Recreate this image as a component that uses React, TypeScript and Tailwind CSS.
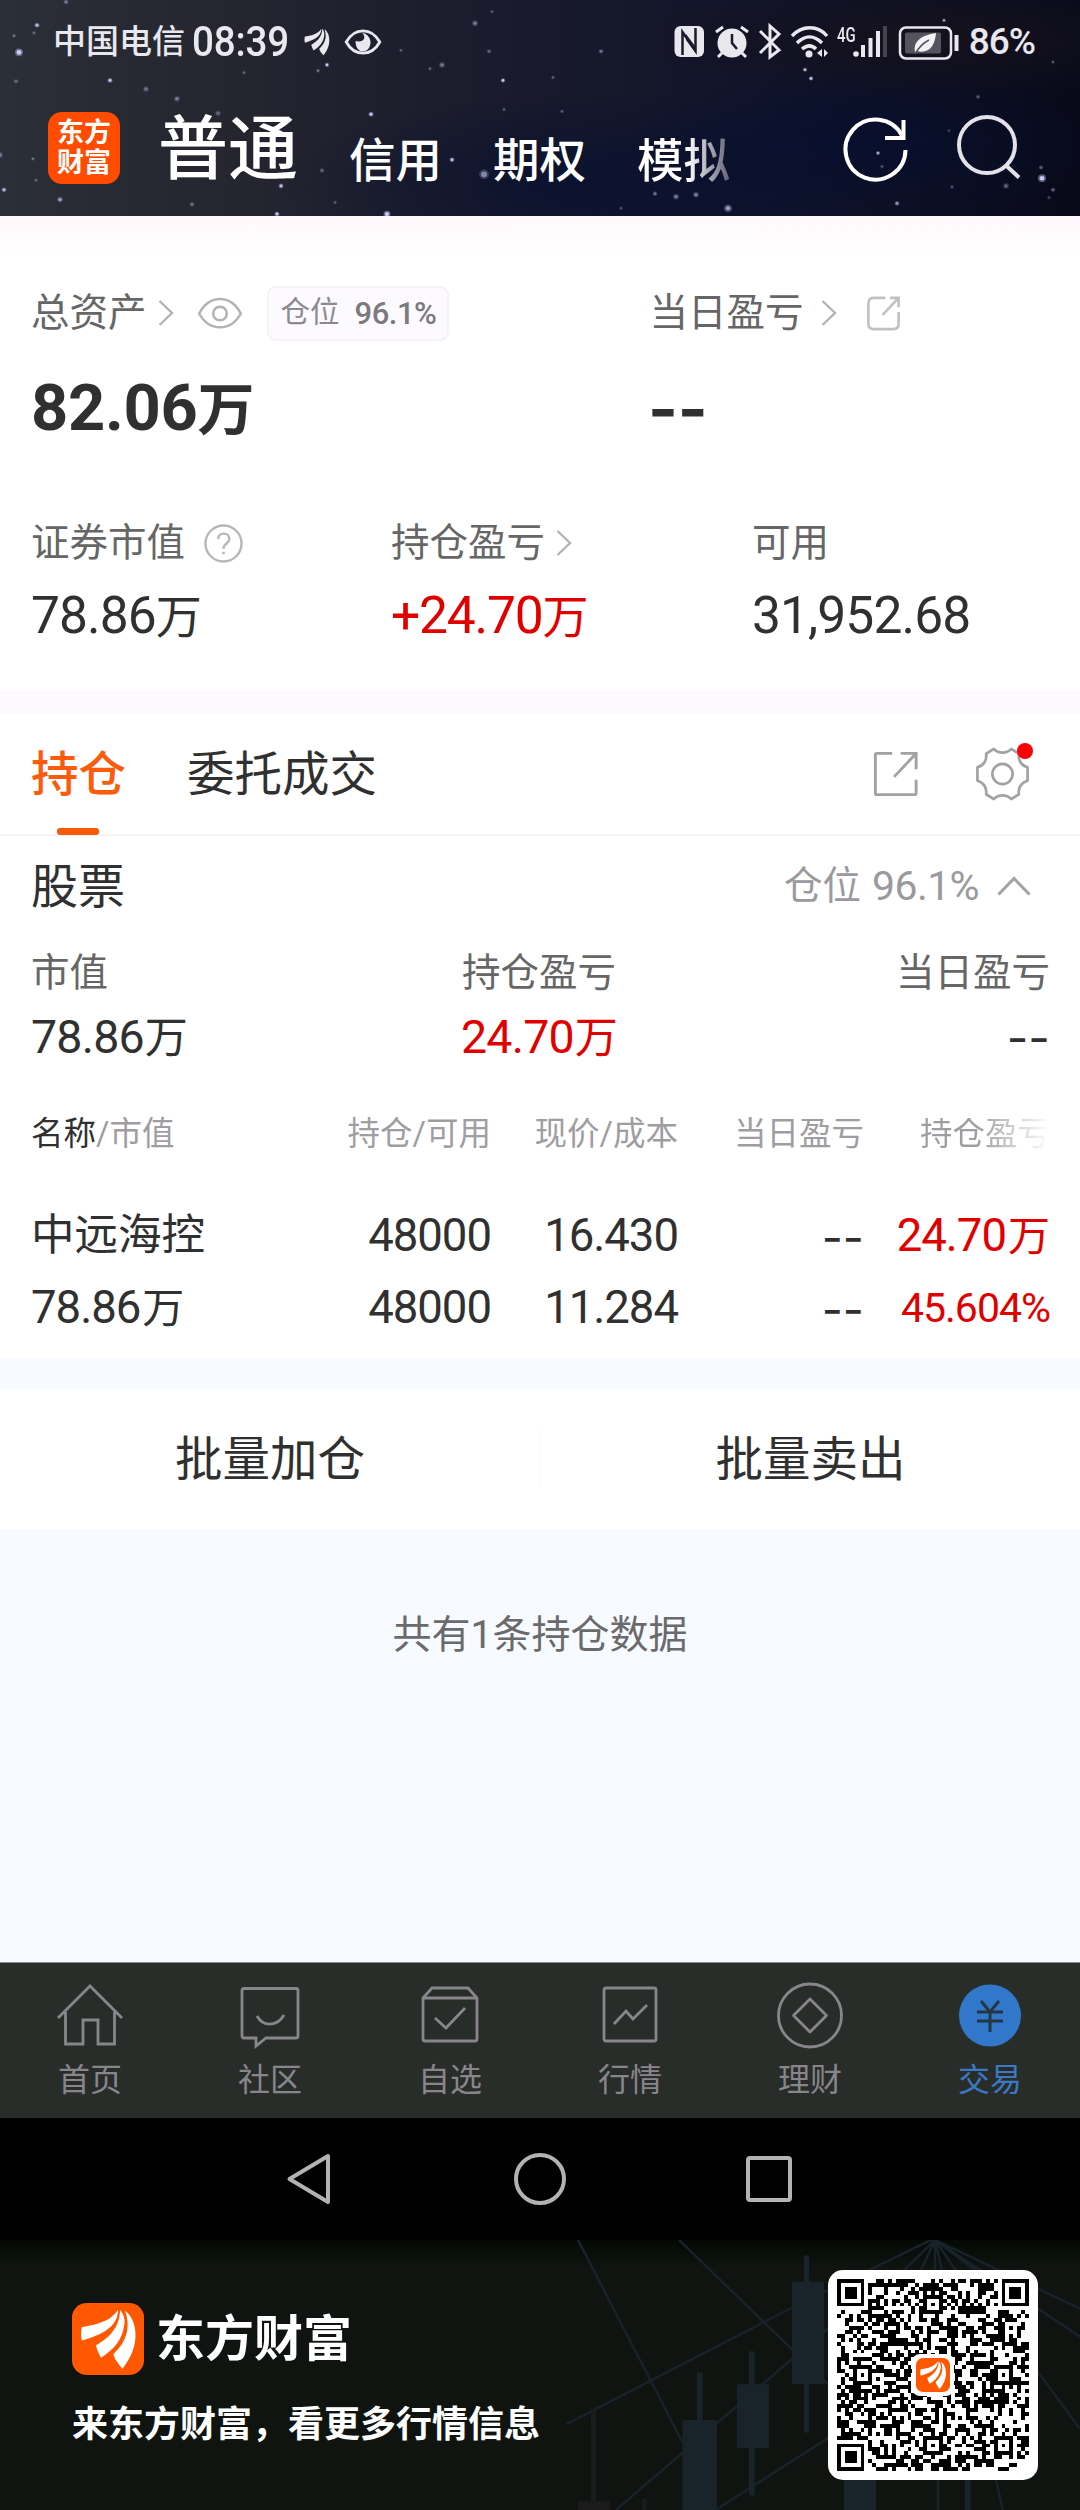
import React from 'react';

interface IconProps {
  className?: string;
}

interface Holding {
  name: string;
  value: string;
  amount: string;
  available: string;
  price: string;
  cost: string;
  profit: string;
  profitRate: string;
}

const holdings: Holding[] = [
  {
    name: '中远海控',
    value: '78.86',
    amount: '48000',
    available: '48000',
    price: '16.430',
    cost: '11.284',
    profit: '24.70',
    profitRate: '45.604%',
  },
];

// x, y, radius, opacity
const stars = [
  [19, 54, 4, 0.95], [37, 26, 2.5, 0.8], [14, 37, 2, 0.4], [34, 34, 2, 0.3], [16, 84, 2.5, 0.3],
  [110, 83, 2.5, 0.9], [146, 92, 3, 0.35], [177, 102, 3, 0.4], [218, 117, 3, 0.3], [327, 67, 2.2, 0.9],
  [318, 73, 2, 0.4], [244, 75, 2, 0.3], [371, 118, 2.5, 0.9], [452, 165, 2.5, 0.85], [484, 180, 5, 0.5],
  [442, 67, 3, 0.4], [430, 71, 2, 0.3], [503, 83, 2.2, 0.9], [475, 24, 3, 0.4], [492, 12, 2, 0.3],
  [489, 53, 2.5, 0.3], [401, 52, 2, 0.3], [4, 196, 2.5, 0.8], [60, 206, 2.8, 0.6], [33, 164, 2, 0.35],
  [36, 186, 2, 0.3], [281, 192, 2.5, 0.85], [277, 221, 2.5, 0.9], [387, 221, 3.5, 0.95], [192, 211, 2.5, 0.35],
  [322, 176, 2.5, 0.3], [335, 209, 2, 0.3], [66, 2, 2.5, 0.4], [504, 113, 2, 0.3], [0, 160, 3, 0.4],
  [601, 53, 2.5, 0.4], [553, 80, 2, 0.3], [805, 72, 2.2, 0.8], [811, 81, 2.2, 0.95], [944, 21, 2, 0.7],
  [655, 200, 2.5, 0.4], [676, 203, 3, 0.45], [696, 201, 3, 0.45], [728, 215, 4, 0.6], [897, 210, 2.5, 0.6],
  [878, 158, 2.2, 0.7], [882, 172, 2, 0.3], [1042, 184, 4, 0.95], [1041, 173, 2.5, 0.3], [1053, 196, 2.5, 0.35],
  [1006, 192, 3, 0.35], [952, 193, 2, 0.3], [978, 100, 2.5, 0.3], [1053, 64, 2, 0.3], [562, 115, 2, 0.3],
  [949, 135, 2, 0.2], [1049, 204, 2, 0.25], [621, 215, 2, 0.25],
];

function StarField() {
  return (
    <svg className="absolute inset-0 h-full w-full" viewBox="0 0 1080 223" preserveAspectRatio="none">
      <defs>
        <linearGradient id="sky" x1="0" y1="0" x2="1" y2="0">
          <stop offset="0" stopColor="#2b2f38" />
          <stop offset="0.2" stopColor="#25262f" />
          <stop offset="0.48" stopColor="#191a2c" />
          <stop offset="0.72" stopColor="#10132a" />
          <stop offset="1" stopColor="#080a1a" />
        </linearGradient>
        <radialGradient id="blue">
          <stop offset="0" stopColor="#060f30" stopOpacity="0.7" />
          <stop offset="1" stopColor="#060f30" stopOpacity="0" />
        </radialGradient>
        <radialGradient id="brown">
          <stop offset="0" stopColor="#17121c" stopOpacity="0.9" />
          <stop offset="1" stopColor="#17121c" stopOpacity="0" />
        </radialGradient>
      </defs>
      <rect width="1080" height="223" fill="url(#sky)" />
      <ellipse cx="580" cy="190" rx="300" ry="95" fill="url(#blue)" />
      <ellipse cx="860" cy="150" rx="240" ry="80" fill="url(#blue)" />
      <ellipse cx="920" cy="40" rx="300" ry="60" fill="url(#brown)" />
      {stars.map(([x, y, r, o], i) => (
        <g key={i} fill="#cfd0ff">
          <circle cx={x} cy={y} r={r} opacity={o * 0.4} />
          <circle cx={x} cy={y} r={r * 0.6} opacity={o} />
        </g>
      ))}
    </svg>
  );
}

function Wings() {
  return (
    <>
      <path d="M10 25C22 23 38 20 46 7C46 20 38 31 10 39C8.500 34 9 28 10 25Z" />
      <path d="M48 7C51 11 53 15 52.500 21C51 38 42 48 29 57C27 53 24.500 48 24 44C36 37 48 26 48 7Z" />
      <path d="M53 8C60 13 64 24 63.500 35C63 50 56 61 50.500 68.500C47 64 42 58 41.500 53C52 43 60 28 53 8Z" />
    </>
  );
}

function BrandMark({ className }: IconProps) {
  return (
    <svg className={className} viewBox="0 0 72 75" preserveAspectRatio="none" fill="#fff">
      <rect width="72" height="75" rx="15" fill="#ff5800" />
      <Wings />
    </svg>
  );
}

function StatusIcons() {
  return (
    <svg width="290" height="44" viewBox="668 20 290 44" fill="none" stroke="#e8e8ee" strokeWidth="3">
      {/* nfc */}
      <rect x="671.500" y="26" width="29.500" height="31" rx="6" fill="#e8e8ee" stroke="none" />
      <path d="M679.500 55V32L692.500 51V28" stroke="#1a1a2a" strokeWidth="2.500" />
      <path d="M683 34L692 46V52L683 40Z" fill="#1a1a2a" stroke="none" />
      {/* alarm */}
      <circle cx="729" cy="43" r="14.500" fill="#e8e8ee" stroke="none" />
      <path d="M713 32L720 27M745 32L738 27M719 53L715 57M739 53L743 57" />
      <path d="M729 34V43L734 49" stroke="#1a1a2a" strokeWidth="2.500" />
      {/* bluetooth */}
      <path d="M757 31L776 50L767 57V26L776 34L757 53" strokeWidth="3" />
      {/* wifi */}
      <path d="M789 36C799 25 815 25 824 36M794 43C802 35 811 35 819 43M799 49C804 45 809 45 813 49" strokeWidth="3.500" />
      <circle cx="806" cy="54" r="3.500" fill="#e8e8ee" stroke="none" />
      <path d="M814 53L819 49V57ZM825 53L821 49V57Z" fill="#e8e8ee" stroke="none" />
      {/* signal */}
      <circle cx="853" cy="54" r="2.800" fill="#e8e8ee" stroke="none" />
      <path d="M860 57V45M867.500 57V38M875 57V31" strokeWidth="4" />
      <path d="M882 57V26" strokeWidth="4" stroke="#44444f" />
      {/* battery */}
      <rect x="897" y="27.500" width="51" height="31" rx="6" strokeWidth="2.500" />
      <rect x="902" y="32.500" width="36" height="21" rx="2" fill="#54545f" stroke="none" />
      <path d="M953.500 35V51" strokeWidth="4" />
      <path d="M912 52C910 42 918 35 933 33C932 46 926 54 914 51Z" fill="#f2f2f6" stroke="none" />
      <path d="M912 54C916 47 920 43 926 40" stroke="#54545f" strokeWidth="1.500" />
    </svg>
  );
}

function EyeIcon({ className }: IconProps) {
  return (
    <svg className={className} viewBox="0 0 46 34" fill="none" stroke="#b4b2b6" strokeWidth="2.600">
      <path d="M1.500 17C12-3 34-3 44.500 17C34 36 12 36 1.500 17Z" />
      <circle cx="23" cy="17" r="7" />
    </svg>
  );
}

function Chevron({ className }: IconProps) {
  return (
    <svg className={className} viewBox="0 0 16 26" fill="none" stroke="#b4b2b6" strokeWidth="2.400">
      <path d="M1.500 1L14 13L1.500 25" />
    </svg>
  );
}

function Wan({ className = '' }: IconProps) {
  return <span className={`tracking-normal ${className}`}>万</span>;
}

function Dashes({ className = '' }: IconProps) {
  return <span className={`font-[Inter] leading-none ${className}`}>--</span>;
}

function Header() {
  return (
    <header className="relative h-[216px] overflow-hidden text-white">
      <StarField />
      <div className="relative flex h-[83px] items-center pl-[53px] text-[#e8e8ee]">
        <span className="text-[33px] leading-none font-medium">中国电信</span>
        <span className="ml-[7px] w-[105px] origin-left scale-x-92 text-[42px] leading-none font-medium tracking-[-0.2px]">08:39</span>
        <svg width="26" height="28" viewBox="8 5 57 65" preserveAspectRatio="none" fill="#e8e8ee" className="ml-[7px]">
          <Wings />
        </svg>
        <svg width="40" height="28" viewBox="0 0 40 30" fill="none" stroke="#e8e8ee" strokeWidth="3" className="ml-[13px]">
          <path d="M2 15C11-1 29-1 38 15C29 31 11 31 2 15Z" />
          <path d="M19 5C24 10 21 16 12 14C12 30 29 28 28 14C27 9 24 6 19 5Z" fill="#e8e8ee" stroke="none" />
        </svg>
        <div className="relative ml-auto flex items-center">
          <StatusIcons />
          <span className="absolute top-[5px] left-[166px] origin-left scale-x-75 text-[20px] leading-none font-medium">4G</span>
          <span className="mr-[45px] ml-[8px] text-[37px] leading-none font-medium tracking-[-1px]">86%</span>
        </div>
      </div>
      <div className="relative flex h-[133px] items-start">
        <div className="mt-[29px] ml-[48px] flex h-[72px] w-[72px] flex-col items-center justify-center gap-[3px] rounded-[14px] bg-[#ff4c00] text-[27px] leading-[27px] font-bold">
          <span>东方</span>
          <span>财富</span>
        </div>
        <nav className="flex w-[611px] items-start pl-[38px] leading-none">
          <span className="mt-[32px] text-[70px] font-medium">普通</span>
          <span className="mt-[55px] ml-[51px] text-[46.5px] font-medium">信用</span>
          <span className="mt-[55px] ml-[51px] text-[46.5px] font-medium">期权</span>
          <span className="mt-[55px] ml-[51px] bg-linear-to-r from-white from-55% to-[#5f6076] bg-clip-text text-[46.5px] font-medium text-transparent">
            模拟
          </span>
        </nav>
        <svg width="200" height="80" viewBox="835 107 200 80" fill="none" stroke="#fff" strokeWidth="4" className="mt-[24px] ml-[104px]">
          <path d="M905.500 150A30 30 0 1 1 902 135.500" />
          <path d="M903.500 120V138H885" />
          <g stroke="#e4e2e8">
            <circle cx="987" cy="145" r="28" />
            <path d="M1005 164.500L1019 177.500" />
          </g>
        </svg>
      </div>
    </header>
  );
}

function Summary() {
  return (
    <section className="h-[498px] bg-linear-to-b from-[#fff8fc] via-white via-8% to-white pt-[70px] leading-none">
      <div className="flex h-[54px] items-center pl-[31px] text-[38.5px] text-[#666]">
        <span>总资产</span>
        <Chevron className="ml-[11px] h-[26px] w-[16px]" />
        <EyeIcon className="ml-[23px] h-[33px] w-[46px]" />
        <span className="ml-[24px] flex h-[55px] w-[182px] items-center rounded-[9px] border-2 border-[#f6f0f7] bg-[#fdfaff] pl-[12px] text-[29.5px] text-[#8c8a90]">
          仓位
          <span className="ml-[15px] text-[31px] font-medium tracking-[-0.5px] text-[#7b7a7e]">96.1%</span>
        </span>
        <span className="ml-[201px]">当日盈亏</span>
        <Chevron className="ml-[17px] h-[26px] w-[16px]" />
        <svg width="35" height="35" viewBox="0 0 36 37" fill="none" stroke="#c2c0c4" strokeWidth="2.800" className="ml-[29px]">
          <path d="M20 2H8Q2 2 2 8V29Q2 35 8 35H28Q34 35 34 29V17" />
          <path d="M25 2H34V12M34 2L17 20" />
        </svg>
      </div>
      <div className="mt-[38px] flex h-[60px] items-center pl-[31px] text-[65px] font-bold tracking-[-0.3px] text-[#303030]">
        <span className="w-[617px]">
          82.06<Wan className="text-[57px]" />
        </span>
        <Dashes className="mt-[2px] text-[64px]" />
      </div>
      <div className="mt-[85px] flex h-[40px] items-center pl-[31px] text-[38.5px] text-[#666]">
        <div className="flex w-[360px] items-center">
          证券市值
          <svg width="39" height="39" viewBox="0 0 40 40" fill="none" stroke="#b8b6ba" strokeWidth="2.500" className="ml-[19px]">
            <circle cx="20" cy="20" r="18.500" />
            <path d="M14.500 15.500C14.500 8 26 8 26 15.500C26 20 20 19.500 20 25.500M20 28.500V31" />
          </svg>
        </div>
        <div className="flex w-[361px] items-center">
          持仓盈亏
          <Chevron className="ml-[11px] h-[26px] w-[16px]" />
        </div>
        <span>可用</span>
      </div>
      <div className="mt-[26px] flex h-[54px] items-center pl-[31px] text-[51.5px] tracking-[-0.9px] text-[#303030]">
        <span className="w-[360px]">
          78.86<Wan className="text-[46px]" />
        </span>
        <span className="w-[361px] tracking-[-1.2px] text-[#e10000]">
          +24.70<Wan className="text-[46px]" />
        </span>
        <span>31,952.68</span>
      </div>
      <div className="mt-[47px] h-[24px] bg-[#fef9fe]" />
    </section>
  );
}

function Tabs() {
  return (
    <div className="flex h-[122px] items-center border-b-2 border-[#f6f1f4] pl-[31px] text-[47.5px] leading-none">
      <div className="relative flex h-full items-center pt-[4px] font-medium text-[#fa5c0c]">
        持仓
        <span className="absolute bottom-[-1px] left-[26px] h-[7px] w-[42px] rounded-[3px] bg-[#f85a0a]" />
      </div>
      <span className="ml-[61px] pt-[4px] text-[#303030]">委托成交</span>
      <svg width="46" height="46" viewBox="0 0 48 48" fill="none" stroke="#a3a1a4" strokeWidth="3" className="ml-auto">
        <path d="M20 2.500H4Q2.500 2.500 2.500 4V44Q2.500 45.500 4 45.500H43Q45 45.500 45 44V30" />
        <path d="M29 2.500H45V19M45 2.500L22 27" />
      </svg>
      <div className="relative mr-[50px] ml-[56px]">
        <svg width="55" height="54" viewBox="0 0 56 56" fill="none" stroke="#a3a1a4" strokeWidth="2.800" strokeLinejoin="round">
          <path d="M19 2C24 7 32 7 37 2L45 7C44 13 47 19 54 21V35C47 37 44 43 45 49L37 54C32 49 24 49 19 54L11 49C12 43 9 37 2 35V21C9 19 12 13 11 7Z" />
          <circle cx="28" cy="28" r="10.500" />
        </svg>
        <span className="absolute top-[-4px] right-[-3px] h-[16px] w-[16px] rounded-full bg-[#fb0007]" />
      </div>
    </div>
  );
}

function Positions() {
  return (
    <section className="h-[522px] bg-white pr-[30px] pl-[31px] leading-none text-[#303030]">
      <div className="flex h-[100px] items-center text-[47px]">
        <span>股票</span>
        <span className="ml-auto text-[38.5px] text-[#9b999d]">仓位</span>
        <span className="ml-[11px] text-[41px] tracking-[-0.6px] text-[#9b999d]">96.1%</span>
        <svg width="34" height="20" viewBox="0 0 34 20" fill="none" stroke="#a3a1a4" strokeWidth="3" className="mr-[19px] ml-[18px]">
          <path d="M1.500 18.500L17 2.500L32.500 18.500" />
        </svg>
      </div>
      <div className="mt-[17px] flex h-[40px] items-center justify-between text-[38.5px] text-[#666]">
        <span className="w-[431px]">市值</span>
        <span className="flex-1">持仓盈亏</span>
        <span>当日盈亏</span>
      </div>
      <div className="mt-[19px] flex h-[50px] items-center justify-between text-[46.5px] tracking-[-0.8px]">
        <span className="w-[430px]">
          78.86<Wan className="ml-[1px] text-[43px]" />
        </span>
        <span className="flex-1 text-[#e10000]">
          24.70<Wan className="ml-[1px] text-[43px]" />
        </span>
        <Dashes className="text-[47px] tracking-normal" />
      </div>

      <div className="mt-[52px] grid h-[40px] grid-cols-[460px_187px_186px_186px] items-center text-right text-[32.500px] text-[#9f9da1]">
        <div className="flex text-left">
          <span className="text-[#303030]">名称</span>/市值
          <span className="ml-auto">持仓/可用</span>
        </div>
        <span>现价/成本</span>
        <span>当日盈亏</span>
        <span className="bg-linear-to-r from-[#9f9da1] from-60% to-white bg-clip-text text-transparent">持仓盈亏</span>
      </div>

      {holdings.map((h) => (
        <div key={h.name} className="mt-[57px] flex flex-col gap-[22px] text-[45.5px] tracking-[-1px]">
          <div className="grid h-[50px] grid-cols-[460px_187px_186px_186px] items-center text-right">
            <div className="flex items-center justify-between">
              <span className="text-[43.5px] tracking-normal">{h.name}</span>
              <span>{h.amount}</span>
            </div>
            <span>{h.price}</span>
            <Dashes className="mt-[2px] text-[46px] tracking-normal" />
            <span className="text-[#e10000]">
              {h.profit}
              <Wan className="ml-[2px] text-[42px]" />
            </span>
          </div>
          <div className="grid h-[50px] grid-cols-[460px_187px_186px_186px] items-center text-right">
            <div className="flex items-center justify-between">
              <span>
                {h.value}
                <Wan className="ml-[2px] text-[42px]" />
              </span>
              <span>{h.available}</span>
            </div>
            <span>{h.cost}</span>
            <Dashes className="mt-[2px] text-[46px] tracking-normal" />
            <span className="text-[41px] tracking-[-1px] text-[#e10000]">{h.profitRate}</span>
          </div>
        </div>
      ))}
    </section>
  );
}

function BatchActions() {
  return (
    <>
      <div className="mt-[31px] flex h-[140px] items-center bg-white text-center text-[47.500px] leading-none text-[#303030]">
        <button className="h-full w-1/2 pt-[4px]">批量加仓</button>
        <span className="h-[60px] w-px bg-[#fafafa]" />
        <button className="h-full flex-1 pt-[4px]">批量卖出</button>
      </div>
      <p className="mt-[86px] text-center text-[39px] leading-[40px] text-[#6a6a6c]">共有1条持仓数据</p>
    </>
  );
}

const tabs = [
  {
    label: '首页',
    icon: <path d="M3 37L35 5L67 37M10.500 31V63H28V39H43V63H59.500V31" />,
  },
  {
    label: '社区',
    icon: (
      <>
        <path d="M9 7.500H61Q63 7.500 63 9.500V55Q63 57 61 57H31L21 65V57H9Q7 57 7 55V9.500Q7 7.500 9 7.500Z" />
        <path d="M22 35C28 46 42 46 49 34" />
      </>
    ),
  },
  {
    label: '自选',
    icon: (
      <>
        <path d="M8 17L17 7H53L62 17V58Q62 60 60 60H10Q8 60 8 58ZM8 17H62" />
        <path d="M20 37L31 47L50 27" />
      </>
    ),
  },
  {
    label: '行情',
    icon: (
      <>
        <rect x="9" y="7" width="52" height="53" rx="2" />
        <path d="M19 43L31 30L38 38L52 24" />
      </>
    ),
  },
  {
    label: '理财',
    icon: (
      <>
        <circle cx="35" cy="34.500" r="31.500" />
        <path d="M35 18L51.500 34.500L35 51L18.500 34.500Z" strokeLinejoin="round" />
      </>
    ),
  },
];

function TabBar() {
  return (
    <nav className="grid h-[156px] grid-cols-6 border-t border-[#85888a] bg-[#292d2a] text-center text-[32px] leading-none text-[#88858b]">
      {tabs.map((tab) => (
        <div key={tab.label} className="flex flex-col items-center pt-[18px]">
          <svg width="70" height="70" viewBox="0 0 70 70" fill="none" stroke="#88858b" strokeWidth="2.800">
            {tab.icon}
          </svg>
          <span className="mt-[13px]">{tab.label}</span>
        </div>
      ))}
      <div className="flex flex-col items-center pt-[18px] text-[#3b79c4]">
        <svg width="70" height="70" viewBox="0 0 70 70" fill="none" stroke="#253642" strokeWidth="3">
          <circle cx="35" cy="34.500" r="31" fill="#3178cb" stroke="none" />
          <path d="M26 20L35 31L44 20M35 31V51M22 31H48M22 40H48" />
        </svg>
        <span className="mt-[13px]">交易</span>
      </div>
    </nav>
  );
}

function SystemNav() {
  return (
    <div className="flex h-[122px] items-center bg-black">
      <svg width="1080" height="60" viewBox="0 0 1080 60" fill="none" stroke="#b4b2b4" strokeWidth="4" strokeLinejoin="round">
        <path d="M289.500 30L328 7V53Z" />
        <circle cx="540" cy="30" r="24" />
        <rect x="748" y="9" width="42" height="42" rx="2" />
      </svg>
    </div>
  );
}

const QR_SIZE = 49;

// version 8 layout: finders in three corners, alignment marks at 6 / 24 / 42
function buildQr() {
  const cells: boolean[][] = [];
  let seed = 20817;
  for (let y = 0; y < QR_SIZE; y++) {
    cells.push([]);
    for (let x = 0; x < QR_SIZE; x++) {
      seed = (seed * 1103515 + 12345) % 2147483648;
      cells[y].push((seed >> 12) % 100 < 51);
    }
  }
  for (let i = 8; i < QR_SIZE - 8; i++) {
    cells[6][i] = i % 2 === 0;
    cells[i][6] = i % 2 === 0;
  }
  const ring = (cx: number, cy: number, size: number, dark: (d: number) => boolean) => {
    for (let dy = -size; dy <= size; dy++) {
      for (let dx = -size; dx <= size; dx++) {
        const row = cells[cy + dy];
        if (row && row[cx + dx] !== undefined) {
          row[cx + dx] = dark(Math.max(Math.abs(dx), Math.abs(dy)));
        }
      }
    }
  };
  [[3, 3], [45, 3], [3, 45]].forEach(([x, y]) => ring(x, y, 4, (d) => d < 2 || d === 3));
  [[24, 6], [6, 24], [42, 24], [24, 42], [42, 42]].forEach(([x, y]) => ring(x, y, 2, (d) => d !== 1));
  return cells;
}

const qrPath = buildQr()
  .map((row, y) => row.map((on, x) => (on ? `M${x} ${y}h1v1h-1z` : '')).join(''))
  .join('');

function QrCode() {
  return (
    <div className="relative flex h-[210px] w-[210px] items-center justify-center rounded-[15px] bg-white">
      <svg width="192" height="192" viewBox="0 0 49 49" shapeRendering="crispEdges">
        <path d={qrPath} fill="#000" />
      </svg>
      <div className="absolute top-[84px] left-[84px] flex h-[42px] w-[42px] items-center justify-center rounded-[8px] bg-white">
        <BrandMark className="h-[34px] w-[34px]" />
      </div>
    </div>
  );
}

function ChartBackdrop() {
  return (
    <svg className="absolute top-0 right-0" width="540" height="270" viewBox="0 0 540 279" preserveAspectRatio="none" fill="#18242a" stroke="#18222a" strokeWidth="2.500">
      <path
        fill="none"
        d="M38 0L143 210M139 0L289 150M27 190L252 70L395 -2M76 279L289 90M177 278L289 204M395 0L350 45M395 0L375 45M395 0V45M395 0L405 45M395 0L425 45M395 0L440 35M395 0L540 71M395 0L540 100M497 135L540 195M398 240V279M456 248L463 280M284 96L310 62"
      />
      <g stroke="none">
        <rect x="252" y="43" width="32" height="106" />
        <rect x="264" y="16" width="5" height="183" />
        <rect x="197" y="149" width="32" height="66" />
        <rect x="209" y="115" width="5.500" height="149" />
        <rect x="142.500" y="186" width="34.500" height="93" />
        <rect x="157" y="137" width="5.500" height="60" />
        <rect x="304" y="240" width="32" height="39" />
        <rect x="425" y="240" width="5.500" height="39" />
        <rect x="51" y="174" width="5" height="96" fill="#1b1b1b" />
        <rect x="38" y="270" width="32" height="9" fill="#1b1b1b" />
        <rect x="102" y="267" width="5" height="12" fill="#1b1b1b" />
      </g>
    </svg>
  );
}

function ShareFooter() {
  return (
    <footer className="relative flex h-[270px] justify-between overflow-hidden bg-linear-to-b from-[#040905] to-[#0f1410] to-10% text-white">
      <ChartBackdrop />
      <div className="relative pt-[63px] pl-[72px]">
        <div className="flex h-[72px] items-center">
          <BrandMark className="h-[72px] w-[72px]" />
          <span className="ml-[12px] text-[49px] leading-none font-bold">东方财富</span>
        </div>
        <p className="mt-[30px] text-[36px] leading-[40px] font-bold">来东方财富，看更多行情信息</p>
      </div>
      <div className="relative mt-[30px] mr-[42px]">
        <QrCode />
      </div>
    </footer>
  );
}

export default function App() {
  return (
    <div lang="zh-CN" className="flex h-[2510px] w-[1080px] flex-col overflow-hidden bg-[#f7faff] font-[Roboto,'Noto_Sans_CJK_SC',sans-serif]">
      <Header />
      <Summary />
      <main className="h-[1248px] bg-[#f7faff]">
        <div className="bg-white">
          <Tabs />
          <Positions />
        </div>
        <BatchActions />
      </main>
      <TabBar />
      <SystemNav />
      <ShareFooter />
    </div>
  );
}
